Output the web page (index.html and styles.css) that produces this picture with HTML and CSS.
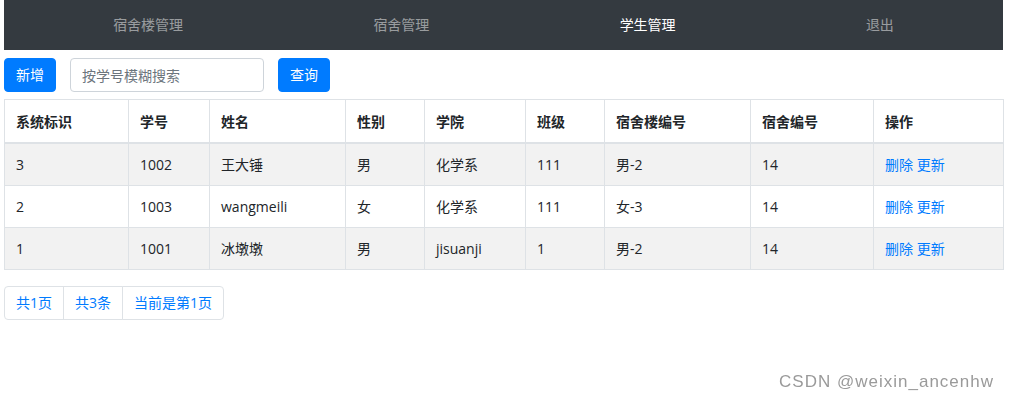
FILE: index.html
```html
<!DOCTYPE html>
<html lang="zh-CN">
<head>
<meta charset="utf-8">
<title>学生管理</title>
<link rel="stylesheet" href="styles.css">
</head>
<body>
<div class="page">
  <nav class="navbar">
    <ul class="nav">
      <li class="nav-item"><a class="nav-link" href="#">宿舍楼管理</a></li>
      <li class="nav-item"><a class="nav-link" href="#">宿舍管理</a></li>
      <li class="nav-item"><a class="nav-link active" href="#">学生管理</a></li>
      <li class="nav-item"><a class="nav-link" href="#">退出</a></li>
    </ul>
  </nav>

  <div class="toolbar">
    <button class="btn" type="button">新增</button>
    <input class="search" type="text" placeholder="按学号模糊搜索">
    <button class="btn" type="button">查询</button>
  </div>

  <table class="table">
    <colgroup>
      <col class="c1"><col class="c2"><col class="c3"><col class="c4"><col class="c5">
      <col class="c6"><col class="c7"><col class="c8"><col class="c9">
    </colgroup>
    <thead>
      <tr>
        <th>系统标识</th><th>学号</th><th>姓名</th><th>性别</th><th>学院</th>
        <th>班级</th><th>宿舍楼编号</th><th>宿舍编号</th><th>操作</th>
      </tr>
    </thead>
    <tbody>
      <tr>
        <td>3</td><td>1002</td><td>王大锤</td><td>男</td><td>化学系</td>
        <td>111</td><td>男-2</td><td>14</td><td><a href="#">删除</a> <a href="#">更新</a></td>
      </tr>
      <tr>
        <td>2</td><td>1003</td><td>wangmeili</td><td>女</td><td>化学系</td>
        <td>111</td><td>女-3</td><td>14</td><td><a href="#">删除</a> <a href="#">更新</a></td>
      </tr>
      <tr>
        <td>1</td><td>1001</td><td>冰墩墩</td><td>男</td><td>jisuanji</td>
        <td>1</td><td>男-2</td><td>14</td><td><a href="#">删除</a> <a href="#">更新</a></td>
      </tr>
    </tbody>
  </table>

  <ul class="pagination">
    <li class="page-item"><a class="page-link" href="#">共1页</a></li>
    <li class="page-item"><a class="page-link" href="#">共3条</a></li>
    <li class="page-item"><a class="page-link" href="#">当前是第1页</a></li>
  </ul>
</div>
<div class="watermark">CSDN @weixin_ancenhw</div>
</body>
</html>
```

FILE: styles.css
```css
* { box-sizing: border-box; }

html, body {
  margin: 0;
  padding: 0;
  background: #fff;
}

body {
  font-family: "Open Sans", "Noto Sans CJK SC", sans-serif;
  font-size: 14px;
  line-height: 21px;
  color: #212529;
}

.page {
  width: 999px;
  margin-left: 4px;
}

.navbar {
  height: 50px;
  background: #343a40;
}

.nav {
  list-style: none;
  margin: 0;
  padding: 0 14px;
  display: flex;
  height: 50px;
}

.nav-item {
  flex: 1 1 auto;
  text-align: center;
}

.nav-link {
  display: block;
  padding: 0 16px;
  line-height: 50px;
  color: rgba(255, 255, 255, 0.5);
  text-decoration: none;
}

.nav-link.active {
  color: #fff;
}

.toolbar {
  display: flex;
  gap: 14px;
  margin-top: 8px;
  height: 34px;
}

.btn {
  font-family: inherit;
  font-size: 14px;
  line-height: 20px;
  height: 34px;
  padding: 6px 11px;
  border: 1px solid #007bff;
  border-radius: 4px;
  background: #007bff;
  color: #fff;
  cursor: pointer;
}

.search {
  width: 194px;
  height: 34px;
  padding: 6px 11px;
  font-family: inherit;
  font-size: 14px;
  color: #495057;
  border: 1px solid #ced4da;
  border-radius: 4px;
  outline: none;
}

.search::placeholder {
  color: #6c757d;
}

.table {
  width: 999px;
  margin-top: 7px;
  margin-bottom: 16px;
  border-collapse: collapse;
  table-layout: fixed;
  border: 1px solid #dee2e6;
}

.c1 { width: 124px; }
.c2 { width: 81px; }
.c3 { width: 136px; }
.c4 { width: 79px; }
.c5 { width: 101px; }
.c6 { width: 79px; }
.c7 { width: 146px; }
.c8 { width: 123px; }
.c9 { width: 130px; }

.table th,
.table td {
  border: 1px solid #dee2e6;
  padding: 10px 11px;
  text-align: left;
  vertical-align: top;
  white-space: nowrap;
}

.table th {
  font-weight: bold;
  border-bottom: 2px solid #dee2e6;
  padding-top: 11px;
  padding-bottom: 10px;
}

.table tbody tr:nth-child(odd) {
  background: #f2f2f2;
}

.table a {
  color: #007bff;
  text-decoration: none;
}

.pagination {
  list-style: none;
  margin: 0;
  padding: 0;
  display: flex;
}

.page-link {
  display: block;
  padding: 7px 11px 7px 11px;
  line-height: 18px;
  color: #007bff;
  text-decoration: none;
  border: 1px solid #dee2e6;
  margin-left: -1px;
  background: #fff;
}

.page-item:first-child .page-link {
  margin-left: 0;
  border-radius: 4px 0 0 4px;
}

.page-item:last-child .page-link {
  border-radius: 0 4px 4px 0;
}

.watermark {
  position: fixed;
  right: 15px;
  bottom: 10px;
  font-family: "Liberation Sans", Arial, sans-serif;
  font-size: 17px;
  line-height: 19px;
  letter-spacing: 1px;
  color: #9a9a9a;
}
```
